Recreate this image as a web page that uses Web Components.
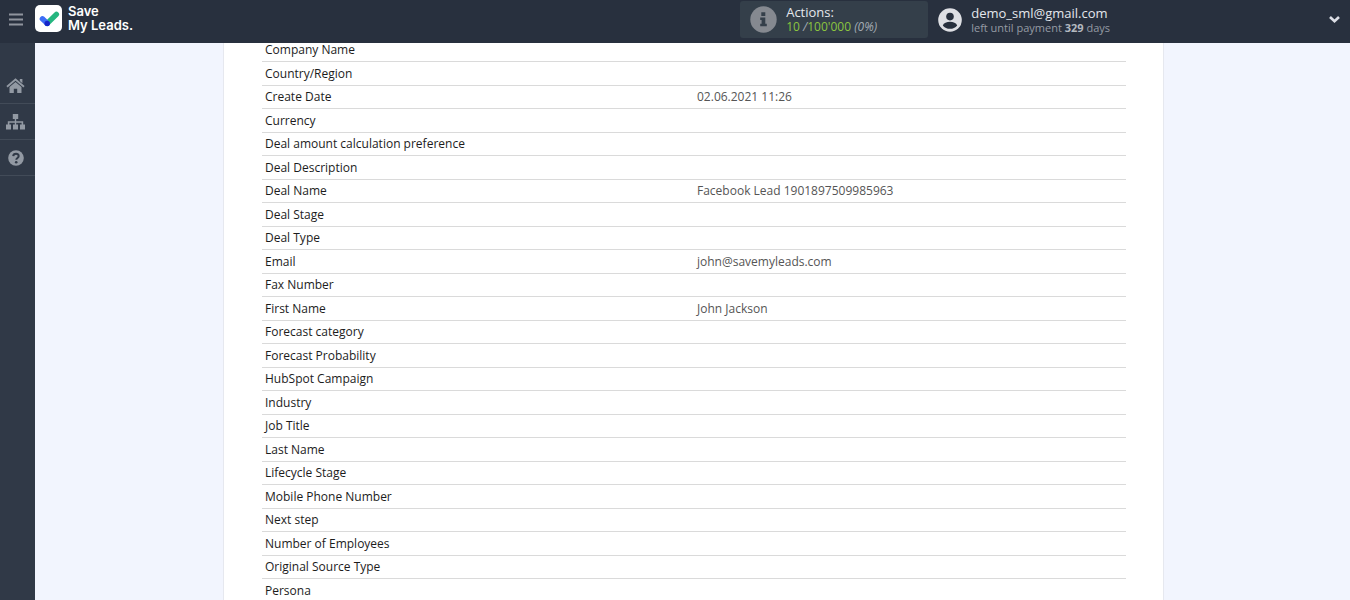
<!DOCTYPE html>
<html lang="en">
<head>
<meta charset="utf-8">
<title>Save My Leads</title>
<style>
body { margin: 0; font-family: "Open Sans", "Noto Sans", sans-serif; }
</style>
</head>
<body>
<sml-app></sml-app>
<script>
function define(name, html, setup) {
  const template = document.createElement('template');
  template.innerHTML = html;
  customElements.define(name, class extends HTMLElement {
    constructor() {
      super();
      this.attachShadow({ mode: 'open' }).append(template.content.cloneNode(true));
    }
    connectedCallback() { if (setup) setup(this, this.shadowRoot); }
  });
}

define('sml-logo', `
<style>
:host { display: block; }
a { display: flex; align-items: center; gap: 6px; color: #fff; text-decoration: none; }
svg { display: block; }
span { font: 600 13px/14px Inter, sans-serif; padding-bottom: 2px; }
</style>
<a href="#">
  <svg width="27" height="27" viewBox="0 0 27 27" aria-hidden="true">
    <rect width="27" height="27" rx="5" fill="#fff"/>
    <path d="M12.2 18.4 21.4 9.4" stroke="#25b67f" stroke-width="5.4" stroke-linecap="round"/>
    <path d="M7.4 13.8 12.2 18.4" stroke="#3d6df5" stroke-width="5.4" stroke-linecap="round"/>
    <circle cx="12.2" cy="18.4" r="2.7" fill="#1625c8"/>
  </svg>
  <span>Save<br>My Leads.</span>
</a>`);

define('sml-quota', `
<style>
:host { display: flex; align-items: center; gap: 9px; box-sizing: border-box; width: 188px; height: 37px; padding-left: 10px; border-radius: 3px; background: #343f4a; color: #e4e7ec; }
svg { display: block; }
.title { font-size: 13px; line-height: 16px; }
.count { font-size: 12px; line-height: 14px; color: #a3abb3; padding-bottom: 2px; }
b { font-weight: 400; color: #8bc53f; }
</style>
<svg width="27" height="27" viewBox="0 0 27 27" aria-hidden="true">
  <circle cx="13.5" cy="13.5" r="13.2" fill="#858990"/>
  <path d="M11.3 6.2h4v3.7h-4zM10.2 11.4h5.1v6.4h1.5v2.5h-6.6v-2.5h1.4v-3.9h-1.4z" fill="#343f4a"/>
</svg>
<div><div class="title">Actions:</div><div class="count"><b>10</b> <i>/</i><b>100'000</b> <i>(0%)</i></div></div>`);

define('sml-account', `
<style>
:host { display: flex; align-items: center; gap: 9px; color: #e4e7ec; }
svg { display: block; }
.mail { font-size: 13px; line-height: 16px; }
.left { font-size: 11px; line-height: 14px; color: #959ba4; }
b { color: #b4b9c0; }
</style>
<svg width="24" height="24" viewBox="0 0 24 24" aria-hidden="true">
  <circle cx="12" cy="12" r="11.8" fill="#dedfe4"/>
  <circle cx="12" cy="8.6" r="3.8" fill="#28303e"/>
  <path d="M4.8 17.4c1.6-5 12.8-5 14.4 0-3.4 4.6-11 4.6-14.4 0z" fill="#28303e"/>
</svg>
<div><div class="mail">demo_sml@gmail.com</div><div class="left">left until payment <b>329</b> days</div></div>`);

define('sml-header', `
<style>
:host { display: block; background: #28303e; }
header { display: flex; box-sizing: border-box; height: 43px; padding: 0 9px 4px 8px; align-items: center; }
button { padding: 0; border: 0; background: none; }
svg { display: block; }
sml-logo { margin-left: 12px; padding-bottom: 2px; }
sml-quota { margin-left: auto; margin-right: 10px; }
.more { margin-left: 218px; }
</style>
<header>
  <button aria-label="Menu"><svg width="15" height="13" viewBox="0 0 15 13"><path d="M1 1.5h14M1 6.5h14M1 11.5h14" stroke="#8f949d" stroke-width="2"/></svg></button>
  <sml-logo></sml-logo>
  <sml-quota></sml-quota>
  <sml-account></sml-account>
  <button class="more" aria-label="Account menu"><svg width="13" height="9" viewBox="0 0 13 9"><path d="M2 2l4.5 4.3L11 2" fill="none" stroke="#dcdee5" stroke-width="2.6"/></svg></button>
</header>`);

define('sml-sidebar', `
<style>
:host { display: block; background: #303947; }
nav { padding-top: 25px; }
a { display: flex; height: 35px; align-items: center; padding-left: 5px; border-bottom: 1px solid #424b58; }
svg { display: block; fill: #9299a3; }
</style>
<nav>
  <a href="#" aria-label="Home"><svg width="21" height="18" viewBox="0 0 21 18"><path d="M10.5 1.2 19.6 9l-1.2 1.4-7.9-6.7-7.9 6.7L1.4 9zM14.8 2h2.6v4.2l-2.6-2.2zM10.5 5l6 5.1V16h-4.3v-4.2H8.8V16H4.5v-5.9z"/></svg></a>
  <a href="#" aria-label="Connections"><svg width="21" height="18" viewBox="0 0 21 18"><path d="M7.8 1h5.4v5h-2v2.2h7v3.4H20v5h-5v-5h1.6V9.8h-5.4v1.8H13v5H8v-5h1.8V9.8H4.4v1.8H6v5H1v-5h1.8V8.2h7V6h-2z"/></svg></a>
  <a href="#" aria-label="Help"><svg width="21" height="18" viewBox="0 0 21 18"><circle cx="11" cy="9" r="7.8"/><path d="M8.2 7.2c.3-3.3 5.6-3.1 5.5-.1 0 1.9-2.4 1.8-2.4 3.6" fill="none" stroke="#303947" stroke-width="2"/><circle cx="11.2" cy="13.2" r="1.3" fill="#303947"/></svg></a>
</nav>`);

define('sml-fields', `
<style>
:host { display: block; }
table { width: 100%; table-layout: fixed; border-collapse: separate; border-spacing: 0; font-size: 12px; line-height: 14px; }
th, td { box-sizing: border-box; height: 24px; width: 50%; padding: 0 3px; border-bottom: 1px solid #dadada; text-align: left; font-weight: 400; vertical-align: middle; }
tr:nth-child(odd) > * { height: 23px; }
th { color: #1c1c1c; }
td { color: #555; }
</style>
<table><tbody></tbody></table>`, (host, root) => {
  const values = { 'Create Date': '02.06.2021 11:26', 'Deal Name': 'Facebook Lead 1901897509985963', 'Email': 'john@savemyleads.com', 'First Name': 'John Jackson' };
  const names = ['Company Name', 'Country/Region', 'Create Date', 'Currency', 'Deal amount calculation preference', 'Deal Description', 'Deal Name', 'Deal Stage', 'Deal Type', 'Email', 'Fax Number', 'First Name', 'Forecast category', 'Forecast Probability', 'HubSpot Campaign', 'Industry', 'Job Title', 'Last Name', 'Lifecycle Stage', 'Mobile Phone Number', 'Next step', 'Number of Employees', 'Original Source Type', 'Persona'];
  root.querySelector('tbody').innerHTML = names.map(n => `<tr><th scope="row">${n}</th><td>${values[n] || ''}</td></tr>`).join('');
});

define('sml-card', `
<style>
:host { display: block; background: #fff; padding: 0 37px 0 38px; border: solid #e6e8ef; border-width: 0 1px; }
</style>
<slot></slot>`);

define('sml-app', `
<style>
:host { display: grid; grid-template: auto minmax(0, 1fr) / 35px minmax(0, 1fr); height: 100vh; overflow: hidden; }
sml-header { grid-column: 1 / -1; }
main { overflow: hidden; background: #f2f5fe; }
sml-card { margin: 0 186px 0 188px; min-height: 100%; box-sizing: border-box; }
/* The list is scrolled: its first row starts under the header. */
sml-fields { margin-top: -4px; }
</style>
<sml-header></sml-header>
<sml-sidebar></sml-sidebar>
<main><sml-card><sml-fields></sml-fields></sml-card></main>`);
</script>
</body>
</html>
